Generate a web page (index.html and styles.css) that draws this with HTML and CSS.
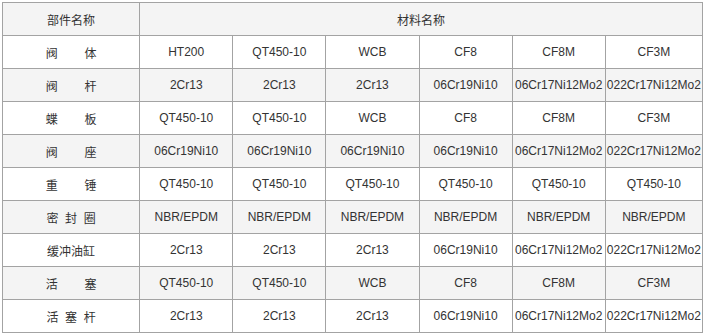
FILE: index.html
```html
<!DOCTYPE html>
<html lang="zh-CN">
<head>
  <meta charset="UTF-8">
  <title>部件材料表</title>
  <link rel="stylesheet" href="styles.css">
</head>
<body>
  <table class="parts">
    <colgroup>
      <col class="c-name">
      <col class="c-mat"><col class="c-mat"><col class="c-mat">
      <col class="c-mat"><col class="c-mat"><col class="c-last">
    </colgroup>
    <thead>
      <tr>
        <th>部件名称</th>
        <th colspan="6">材料名称</th>
      </tr>
    </thead>
    <tbody>
      <tr>
        <td>阀&nbsp;&nbsp;&nbsp;&nbsp;&nbsp;&nbsp;&nbsp;&nbsp;体</td>
        <td>HT200</td><td>QT450-10</td><td>WCB</td><td>CF8</td><td>CF8M</td><td>CF3M</td>
      </tr>
      <tr>
        <td>阀&nbsp;&nbsp;&nbsp;&nbsp;&nbsp;&nbsp;&nbsp;&nbsp;杆</td>
        <td>2Cr13</td><td>2Cr13</td><td>2Cr13</td><td>06Cr19Ni10</td><td>06Cr17Ni12Mo2</td><td>022Cr17Ni12Mo2</td>
      </tr>
      <tr>
        <td>蝶&nbsp;&nbsp;&nbsp;&nbsp;&nbsp;&nbsp;&nbsp;&nbsp;板</td>
        <td>QT450-10</td><td>QT450-10</td><td>WCB</td><td>CF8</td><td>CF8M</td><td>CF3M</td>
      </tr>
      <tr>
        <td>阀&nbsp;&nbsp;&nbsp;&nbsp;&nbsp;&nbsp;&nbsp;&nbsp;座</td>
        <td>06Cr19Ni10</td><td>06Cr19Ni10</td><td>06Cr19Ni10</td><td>06Cr19Ni10</td><td>06Cr17Ni12Mo2</td><td>022Cr17Ni12Mo2</td>
      </tr>
      <tr>
        <td>重&nbsp;&nbsp;&nbsp;&nbsp;&nbsp;&nbsp;&nbsp;&nbsp;锤</td>
        <td>QT450-10</td><td>QT450-10</td><td>QT450-10</td><td>QT450-10</td><td>QT450-10</td><td>QT450-10</td>
      </tr>
      <tr>
        <td>密&nbsp;&nbsp;封&nbsp;&nbsp;圈</td>
        <td>NBR/EPDM</td><td>NBR/EPDM</td><td>NBR/EPDM</td><td>NBR/EPDM</td><td>NBR/EPDM</td><td>NBR/EPDM</td>
      </tr>
      <tr>
        <td>缓冲油缸</td>
        <td>2Cr13</td><td>2Cr13</td><td>2Cr13</td><td>06Cr19Ni10</td><td>06Cr17Ni12Mo2</td><td>022Cr17Ni12Mo2</td>
      </tr>
      <tr>
        <td>活&nbsp;&nbsp;&nbsp;&nbsp;&nbsp;&nbsp;&nbsp;&nbsp;塞</td>
        <td>QT450-10</td><td>QT450-10</td><td>WCB</td><td>CF8</td><td>CF8M</td><td>CF3M</td>
      </tr>
      <tr>
        <td>活&nbsp;&nbsp;塞&nbsp;&nbsp;杆</td>
        <td>2Cr13</td><td>2Cr13</td><td>2Cr13</td><td>06Cr19Ni10</td><td>06Cr17Ni12Mo2</td><td>022Cr17Ni12Mo2</td>
      </tr>
    </tbody>
  </table>
</body>
</html>
```

FILE: styles.css
```css
body {
  margin: 0;
  background: #fff;
  font-family: "Liberation Sans", Arial, "Noto Sans CJK SC", sans-serif;
  font-size: 12px;
  color: #333;
}
.parts {
  margin: 2px 0 0 2px;
  width: 701px;
  table-layout: fixed;
  border-collapse: collapse;
}
.c-name {
  width: 137px;
}
.c-mat {
  width: 93px;
}
.c-last {
  width: 97px;
}
th, td {
  height: 32px;
  padding: 0;
  border: 1px solid #a3a3a3;
  text-align: center;
  vertical-align: middle;
  white-space: nowrap;
  font-weight: normal;
}
thead th {
  background-color: #f4f4f4;
}
tbody tr:nth-child(even) td {
  background-color: #f4f4f4;
}
```
